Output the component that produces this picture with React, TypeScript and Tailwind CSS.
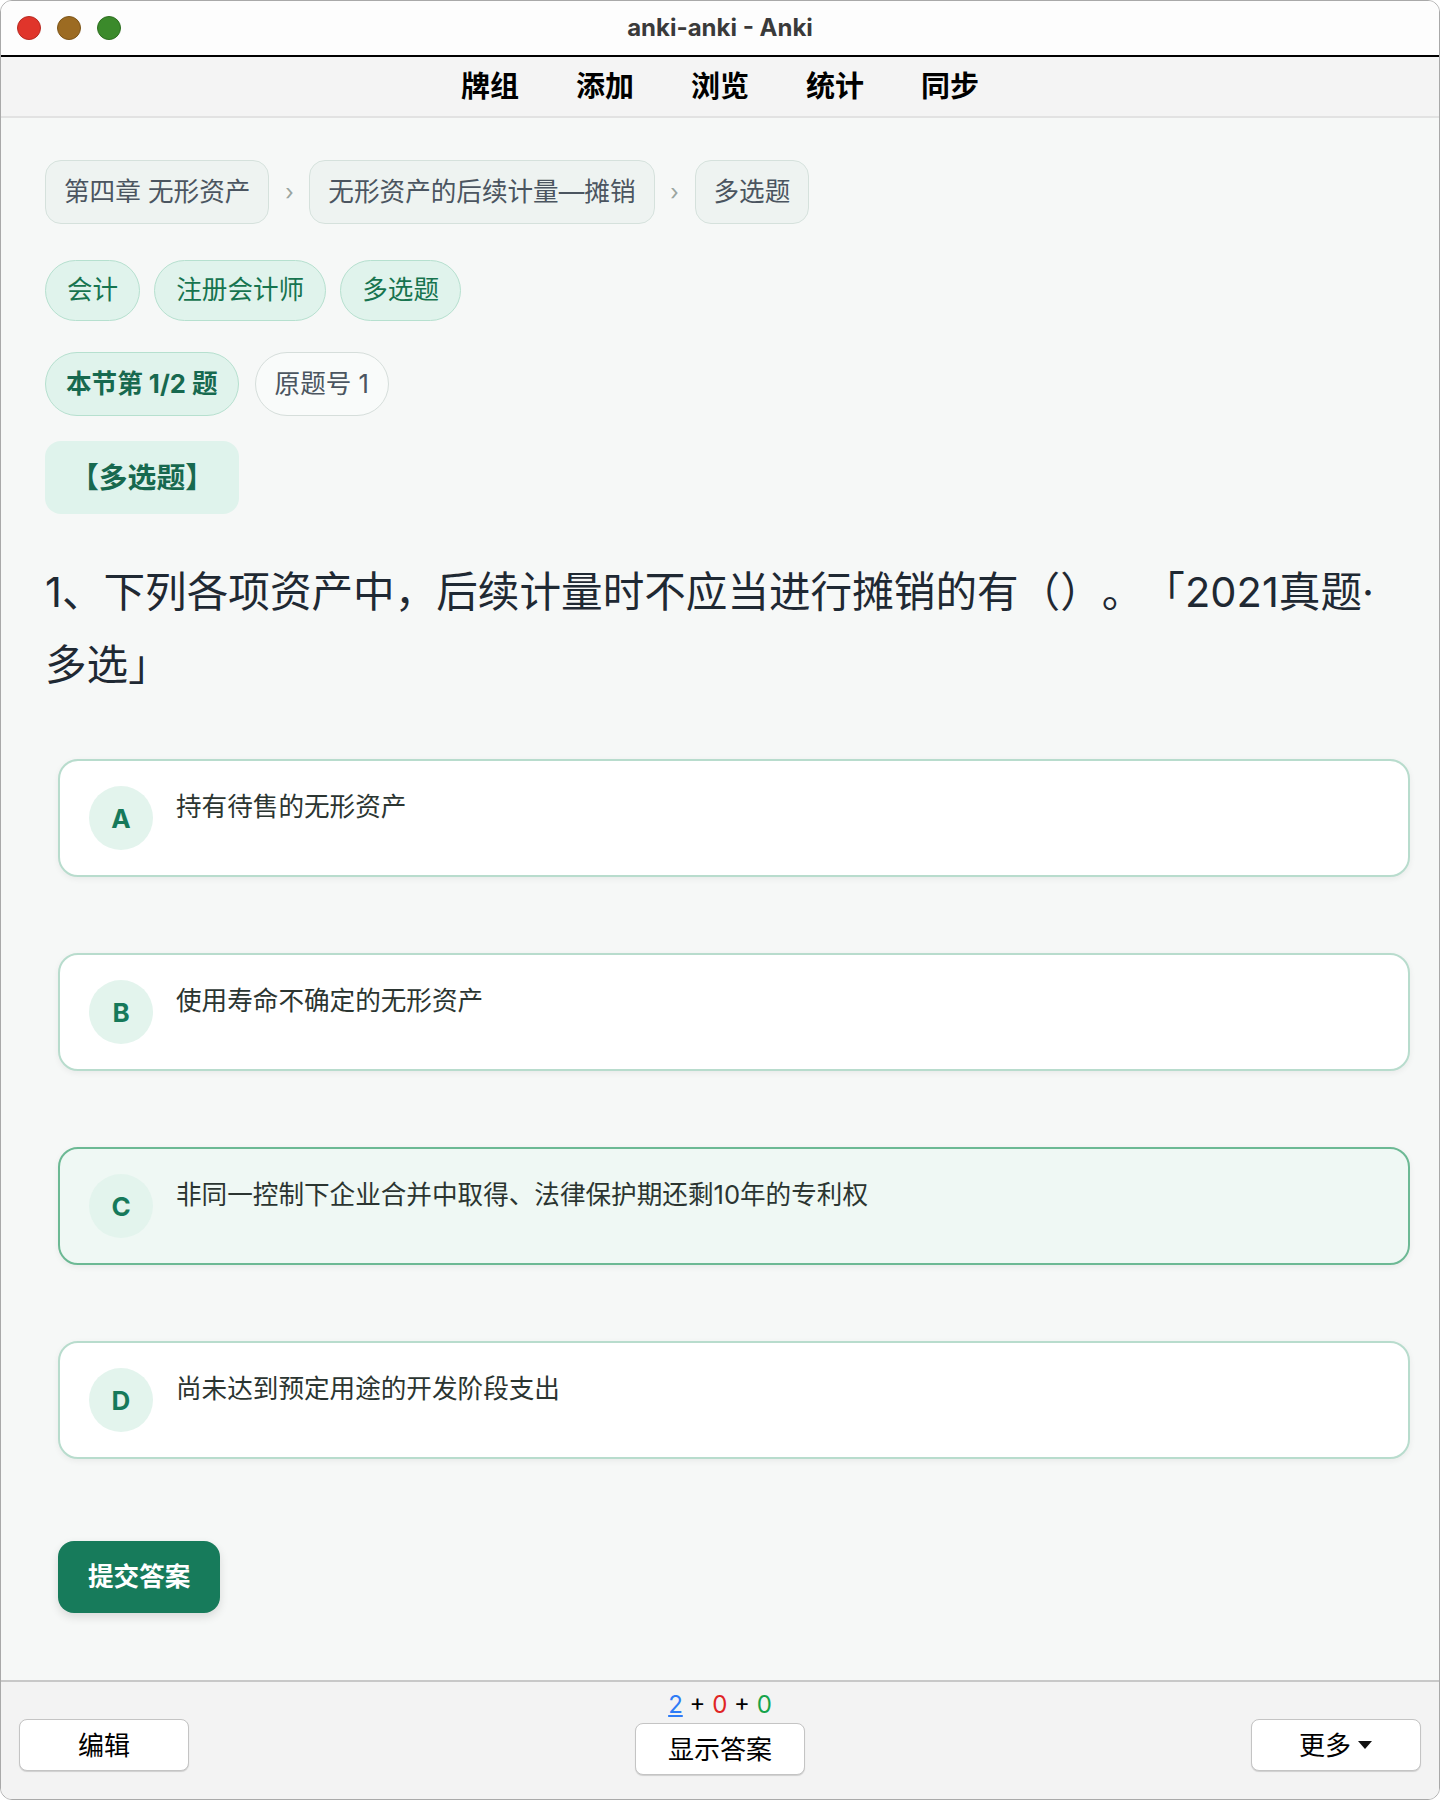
import { memo } from "react";

const options = [
	{ key: "A", text: "持有待售的无形资产", picked: false },
	{ key: "B", text: "使用寿命不确定的无形资产", picked: false },
	{ key: "C", text: "非同一控制下企业合并中取得、法律保护期还剩10年的专利权", picked: true },
	{ key: "D", text: "尚未达到预定用途的开发阶段支出", picked: false },
];

const crumbs = ["第四章 无形资产", "无形资产的后续计量—摊销", "多选题"];
const tags = ["会计", "注册会计师", "多选题"];
const nav = ["牌组", "添加", "浏览", "统计", "同步"];

const TitleBar = () => (
	<div className="grid h-[56px] grid-cols-[1fr_auto_1fr] items-center border-b-2 border-black bg-[#fdfdfd]">
		<div className="flex items-center gap-[16px] pl-[16px]">
			<span className="h-[24px] w-[24px] rounded-full border border-[#b82a22] bg-[#e0352b]" />
			<span className="h-[24px] w-[24px] rounded-full border border-[#7d5518] bg-[#9c6b22]" />
			<span className="h-[24px] w-[24px] rounded-full border border-[#2d6e20] bg-[#3b8a2b]" />
		</div>
		<div className="text-[24px] font-bold text-[#3a3a3a]">anki-anki - Anki</div>
		<div />
	</div>
);

const Toolbar = () => (
	<div className="flex h-[61px] items-center justify-center gap-[57px] border-b-2 border-[#e2e2e2] bg-[#f4f4f4] text-[29px] font-bold text-black">
		{nav.map((item) => (
			<span key={item}>{item}</span>
		))}
	</div>
);

const Option = ({ letter, text, picked }: { letter: string; text: string; picked: boolean }) => (
	<div
		className={
			picked
				? "flex h-[118px] items-start rounded-[20px] border-2 border-[#6cb994] bg-[#eff8f4] px-[29px] py-[25px] shadow-[0_2px_6px_rgba(0,0,0,0.06)]"
				: "flex h-[118px] items-start rounded-[20px] border-2 border-[#b8dccd] bg-white px-[29px] py-[25px] shadow-[0_2px_6px_rgba(0,0,0,0.06)]"
		}
	>
		<div className="flex h-[64px] w-[64px] shrink-0 items-center justify-center rounded-full bg-[#e3f4ed] text-[26px] font-bold text-[#16795a]">
			{letter}
		</div>
		<p className="ml-[23px] text-[25.6px] leading-[41px] text-[#2b3531]">{text}</p>
	</div>
);

const BottomBar = () => (
	<div className="grid h-[119px] grid-cols-[1fr_auto_1fr] border-t-2 border-[#c8c8c8] bg-[#f3f3f3] px-[18px] text-[26px] text-black">
		<div className="pt-[37px]">
			<button className="h-[52px] w-[170px] rounded-[8px] border border-[#c4c4c4] bg-white shadow-[0_1px_1px_rgba(0,0,0,0.15)]">
				编辑
			</button>
		</div>
		<div className="flex flex-col items-center pt-[8px]">
			<div className="h-[29px] text-[24px] leading-[29px]">
				<span className="text-[#2f7cf6] underline">2</span>
				<span> + </span>
				<span className="text-[#e02424]">0</span>
				<span> + </span>
				<span className="text-[#16a34a]">0</span>
			</div>
			<button className="mt-[4px] h-[52px] w-[170px] rounded-[8px] border border-[#c4c4c4] bg-white shadow-[0_1px_1px_rgba(0,0,0,0.15)]">
				显示答案
			</button>
		</div>
		<div className="flex justify-end pt-[37px]">
			<button className="flex h-[52px] w-[170px] items-center justify-center gap-[6px] rounded-[8px] border border-[#c4c4c4] bg-white shadow-[0_1px_1px_rgba(0,0,0,0.15)]">
				更多
				<svg width="16" height="10" viewBox="0 0 16 10">
					<path d="M1 1h14L8 9z" fill="#111" />
				</svg>
			</button>
		</div>
	</div>
);

const App = () => (
	<div className="h-[1800px] w-[1440px] bg-white font-[Inter,'Noto_Sans_CJK_SC',sans-serif] [text-spacing-trim:space-all]">
		<div className="flex h-full flex-col overflow-hidden rounded-[12px] border border-[#a9a9a9]">
			<TitleBar />
			<Toolbar />

			<main className="flex-1 bg-[#f6f8f7] px-[44px] pt-[42px]">
				<div className="flex items-center">
					{crumbs.map((crumb, index) => (
						<div key={crumb} className="flex items-center">
							{index > 0 && (
								<span className="w-[40px] text-center text-[22px] text-[#9aa5a0]">›</span>
							)}
							<span className="flex h-[64px] items-center rounded-[16px] border-[1.5px] border-[#d5e1dc] bg-[#eef3f1] px-[18px] text-[25.6px] text-[#4b5560]">
								{crumb}
							</span>
						</div>
					))}
				</div>

				<div className="mt-[36px] flex gap-[14px]">
					{tags.map((tag) => (
						<span
							key={tag}
							className="flex h-[61px] items-center rounded-full border-[1.5px] border-[#b6e0cf] bg-[#e0f3ec] px-[21px] text-[25.6px] text-[#17744f]"
						>
							{tag}
						</span>
					))}
				</div>

				<div className="mt-[31px] flex gap-[16px]">
					<span className="flex h-[64px] items-center rounded-full border-[1.5px] border-[#b6e0cf] bg-[#e0f3ec] px-[20px] text-[25.6px] font-bold text-[#17694f]">
						本节第 1/2 题
					</span>
					<span className="flex h-[64px] items-center rounded-full border-[1.5px] border-[#d6dedb] bg-[#f9fbfa] px-[19px] text-[25.6px] text-[#4b5560]">
						原题号 1
					</span>
				</div>

				<div className="mt-[25px] flex h-[73px] w-fit items-center rounded-[16px] bg-[#dff3ec] px-[25px] text-[28.8px] font-bold text-[#17694f]">
					【多选题】
				</div>

				<p className="mt-[42px] text-[41.6px] leading-[73px] text-[#1f2933]">
					1、下列各项资产中，后续计量时不应当进行摊销的有（）。「2021真题·多选」
				</p>

				<div className="ml-[13px] mt-[57px] flex w-[1352px] flex-col gap-[76px]">
					{options.map((option) => (
						<Option key={option.key} letter={option.key} text={option.text} picked={option.picked} />
					))}
				</div>

				<button className="ml-[13px] mt-[82px] h-[72px] rounded-[16px] bg-[#177b5b] px-[30px] text-[25.6px] font-bold text-white shadow-[0_4px_10px_rgba(0,0,0,0.12)]">
					提交答案
				</button>
			</main>

			<BottomBar />
		</div>
	</div>
);

export default memo(App);
